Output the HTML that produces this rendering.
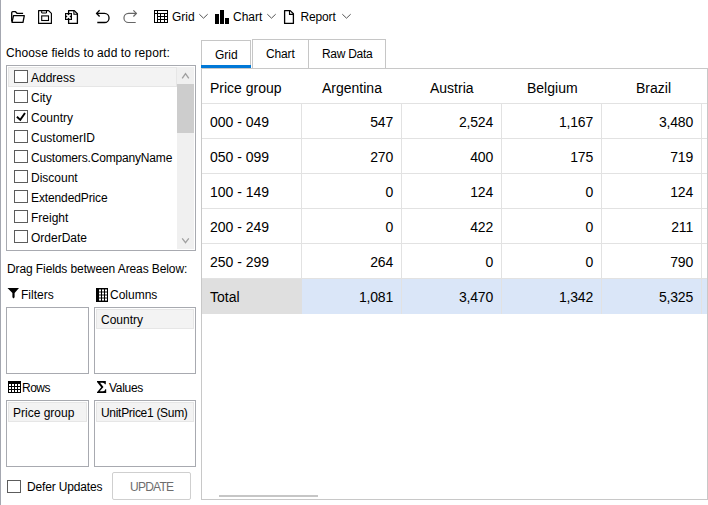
<!DOCTYPE html>
<html><head><meta charset="utf-8">
<style>
*{margin:0;padding:0;box-sizing:border-box}
html,body{width:708px;height:505px;overflow:hidden;background:#fff}
body{position:relative;font-family:"Liberation Sans",sans-serif;font-size:12px;color:#000}
.a{position:absolute}
.t{position:absolute;white-space:pre;line-height:1}
.edge{left:0;top:0;width:1px;height:505px;background:#a4a7b0}
.cb{position:absolute;width:14px;height:13px;border:1px solid #5c5c5c;background:#fff}
.lbrow{position:absolute;left:8px;width:169px;height:20px}
.box{position:absolute;border:1px solid #a8aab0;background:#fff}
.item{position:absolute;background:#f3f3f3;border:1px solid #e6e6e6}
.gl{position:absolute;background:#e2e2e2}
.g14{font-size:14px}
.num{position:absolute;white-space:pre;line-height:1;font-size:14px;text-align:right;width:81px;letter-spacing:-0.2px}
</style></head><body>
<div class="a edge"></div>

<!-- toolbar -->
<svg class="a" style="left:0;top:0" width="360" height="34" viewBox="0 0 360 34">
  <!-- folder -->
  <path d="M11.7 21.5 V12.8 Q11.7 11.7 12.8 11.7 H15.5 L17 13.3 H23.1" fill="none" stroke="#000" stroke-width="1.3" stroke-linejoin="round"/>
  <path d="M12 22.3 L13.5 15.7 H24.3 L23 22.3 Z" fill="none" stroke="#000" stroke-width="1.3" stroke-linejoin="round"/>
  <!-- save -->
  <path d="M38.6 10.6 H48.6 L51.4 13.4 V23.4 H38.6 Z" fill="none" stroke="#000" stroke-width="1.15" stroke-linejoin="round"/>
  <path d="M41.7 10.8 V13 H46.5 V10.8" fill="none" stroke="#000" stroke-width="1"/>
  <rect x="41.7" y="15.9" width="6.8" height="4.6" fill="none" stroke="#000" stroke-width="1.1"/>
  <!-- excel -->
  <path d="M68.6 10.6 H74.3 L77.4 13.7 V23.4 H68.6 Z" fill="none" stroke="#000" stroke-width="1.3" stroke-linejoin="round"/>
  <path d="M73.9 10.8 V14.3 H77.2" fill="none" stroke="#000" stroke-width="1.1"/>
  <rect x="65" y="13" width="7" height="7" fill="#000"/>
  <path d="M66.4 14.4 L70.6 18.6 M70.6 14.4 L66.4 18.6" stroke="#fff" stroke-width="1.5"/>
  <!-- undo -->
  <path d="M96.5 13.4 H104.5 A4.55 4.55 0 0 1 104.5 22.5 H97.3" fill="none" stroke="#000" stroke-width="1.3"/>
  <path d="M99.6 10.3 L96.6 13.4 L99.6 16.5" fill="none" stroke="#000" stroke-width="1.3"/>
  <!-- redo -->
  <path d="M136.5 13.4 H128.5 A4.55 4.55 0 0 0 128.5 22.5 H135.7" fill="none" stroke="#666" stroke-width="1.2"/>
  <path d="M133.4 10.3 L136.4 13.4 L133.4 16.5" fill="none" stroke="#666" stroke-width="1.2"/>
  <!-- grid icon -->
  <g shape-rendering="crispEdges">
  <rect x="154" y="10" width="14" height="13" fill="#000"/>
  <g fill="#fff">
  <rect x="155" y="11" width="2" height="2"/><rect x="158" y="11" width="9" height="2"/>
  <rect x="155" y="14" width="2" height="8"/>
  <rect x="158" y="14" width="2" height="2"/><rect x="161" y="14" width="3" height="2"/><rect x="165" y="14" width="2" height="2"/>
  <rect x="158" y="17" width="2" height="2"/><rect x="161" y="17" width="3" height="2"/><rect x="165" y="17" width="2" height="2"/>
  <rect x="158" y="20" width="2" height="2"/><rect x="161" y="20" width="3" height="2"/><rect x="165" y="20" width="2" height="2"/>
  </g></g>
  <path d="M199.3 14.2 L203.5 18.2 L207.7 14.2" fill="none" stroke="#555" stroke-width="1"/>
  <!-- chart icon -->
  <rect x="215" y="14" width="4" height="10" fill="#000"/>
  <rect x="220" y="10" width="4" height="14" fill="#000"/>
  <rect x="225" y="18" width="4" height="6" fill="#000"/>
  <path d="M267.3 14.2 L271.5 18.2 L275.7 14.2" fill="none" stroke="#555" stroke-width="1"/>
  <!-- report icon -->
  <path d="M284.6 10.6 H290.2 L293.4 13.8 V23.4 H284.6 Z" fill="none" stroke="#000" stroke-width="1.3" stroke-linejoin="round"/>
  <path d="M289.5 10.8 V14.4 H293.2" fill="none" stroke="#000" stroke-width="1.1"/>
  <path d="M342.3 14.2 L346.5 18.2 L350.7 14.2" fill="none" stroke="#555" stroke-width="1"/>
</svg>
<div class="t" style="left:172px;top:11px">Grid</div>
<div class="t" style="left:233px;top:11px">Chart</div>
<div class="t" style="left:300.5px;top:11px;letter-spacing:-0.15px">Report</div>

<!-- left panel -->
<div class="t" style="left:6px;top:47px;letter-spacing:0.1px">Choose fields to add to report:</div>
<div class="box" style="left:6px;top:65px;width:190px;height:186px"></div>
<div class="item" style="left:8px;top:67px;width:169px;height:20px"></div>
<div class="a" style="left:177px;top:67px;width:17px;height:182px;background:#f0f0f0"></div>
<div class="a" style="left:177px;top:84px;width:17px;height:49px;background:#cdcdcd"></div>
<svg class="a" style="left:177px;top:66px" width="18" height="184">
  <path d="M5.2 12.3 L8.5 7.6 L11.8 12.3" fill="none" stroke="#a0a0a0" stroke-width="1.4"/>
  <path d="M5.2 172.4 L8.5 176.6 L11.8 172.4" fill="none" stroke="#a0a0a0" stroke-width="1.3"/>
</svg>
<div class="cb" style="left:14px;top:70px"></div><div class="t" style="left:31px;top:72px">Address</div>
<div class="cb" style="left:14px;top:90px"></div><div class="t" style="left:31px;top:92px">City</div>
<div class="cb" style="left:14px;top:110px"></div><div class="t" style="left:31px;top:112px">Country</div>
<svg class="a" style="left:14px;top:110px" width="14" height="13"><path d="M2.9 6.7 L6.3 9.9 L11 3" fill="none" stroke="#000" stroke-width="1.9"/></svg>
<div class="cb" style="left:14px;top:130px"></div><div class="t" style="left:31px;top:132px">CustomerID</div>
<div class="cb" style="left:14px;top:150px"></div><div class="t" style="left:31px;top:152px;letter-spacing:-0.17px">Customers.CompanyName</div>
<div class="cb" style="left:14px;top:170px"></div><div class="t" style="left:31px;top:172px">Discount</div>
<div class="cb" style="left:14px;top:190px"></div><div class="t" style="left:31px;top:192px;letter-spacing:-0.12px">ExtendedPrice</div>
<div class="cb" style="left:14px;top:210px"></div><div class="t" style="left:31px;top:212px">Freight</div>
<div class="cb" style="left:14px;top:230px"></div><div class="t" style="left:31px;top:232px">OrderDate</div>

<div class="t" style="left:7px;top:263px;letter-spacing:-0.1px">Drag Fields between Areas Below:</div>

<svg class="a" style="left:0;top:280px" width="200" height="120">
  <!-- funnel -->
  <path d="M7.5 8 H19 L14.6 13 V17.2 L13.5 18.5 L12.4 17.2 V13 Z" fill="#000"/>
  <!-- columns icon -->
  <g shape-rendering="crispEdges">
  <rect x="96" y="8" width="12" height="14" fill="#000"/>
  <g fill="#8a8a8a"><rect x="99" y="9" width="2" height="12"/><rect x="102" y="9" width="2" height="12"/><rect x="105" y="9" width="2" height="12"/></g>
  <g fill="#fff">
  <rect x="99" y="10" width="2" height="1"/><rect x="102" y="10" width="2" height="1"/><rect x="105" y="10" width="2" height="1"/>
  <rect x="99" y="13" width="2" height="1"/><rect x="102" y="13" width="2" height="1"/><rect x="105" y="13" width="2" height="1"/>
  <rect x="99" y="16" width="2" height="1"/><rect x="102" y="16" width="2" height="1"/><rect x="105" y="16" width="2" height="1"/>
  <rect x="99" y="19" width="2" height="1"/><rect x="102" y="19" width="2" height="1"/><rect x="105" y="19" width="2" height="1"/>
  </g>
  <!-- rows icon -->
  <rect x="8" y="101" width="13" height="12" fill="#000"/>
  <g fill="#fff">
  <rect x="9" y="104" width="2" height="2"/><rect x="12" y="104" width="2" height="2"/><rect x="15" y="104" width="2" height="2"/><rect x="18" y="104" width="2" height="2"/>
  <rect x="9" y="107" width="2" height="2"/><rect x="12" y="107" width="2" height="2"/><rect x="15" y="107" width="2" height="2"/><rect x="18" y="107" width="2" height="2"/>
  <rect x="9" y="110" width="2" height="2"/><rect x="12" y="110" width="2" height="2"/><rect x="15" y="110" width="2" height="2"/><rect x="18" y="110" width="2" height="2"/>
  </g></g>
  <!-- sigma -->
  <path d="M97 101 H105.8 V104.3 H104.9 Q104.6 102.7 102.6 102.7 H100.1 L103.5 107 L99.7 111.3 H103.1 Q105 111.3 105.3 109.3 H106.2 V113 H97 V112.2 L101.2 107.3 L97 102 Z" fill="#000"/>
</svg>
<div class="t" style="left:21px;top:289px">Filters</div>
<div class="t" style="left:110px;top:289px">Columns</div>
<div class="t" style="left:22px;top:382px;letter-spacing:-0.5px">Rows</div>
<div class="t" style="left:109px;top:382px;letter-spacing:-0.3px">Values</div>

<div class="box" style="left:6px;top:307px;width:83px;height:67px"></div>
<div class="box" style="left:94px;top:307px;width:102px;height:67px"></div>
<div class="item" style="left:96px;top:309px;width:98px;height:20px"></div>
<div class="t" style="left:101px;top:314px">Country</div>
<div class="box" style="left:6px;top:400px;width:83px;height:67px"></div>
<div class="item" style="left:8px;top:402px;width:79px;height:20px"></div>
<div class="t" style="left:13px;top:407px">Price group</div>
<div class="box" style="left:94px;top:400px;width:102px;height:67px"></div>
<div class="item" style="left:96px;top:402px;width:98px;height:20px"></div>
<div class="t" style="left:101px;top:407px;letter-spacing:-0.3px">UnitPrice1 (Sum)</div>

<div class="cb" style="left:7px;top:480px"></div>
<div class="t" style="left:27px;top:481px;letter-spacing:-0.15px">Defer Updates</div>
<div class="a" style="left:112px;top:472px;width:79px;height:28px;border:1px solid #cfcfcf;border-radius:2px"></div>
<div class="t" style="left:130px;top:481px;color:#6d6d6d;letter-spacing:-0.75px">UPDATE</div>

<!-- tabs -->
<div class="a" style="left:201px;top:40px;width:50px;height:28px;border:1px solid #c6c6c6;border-bottom:none"></div>
<div class="a" style="left:201px;top:65px;width:50px;height:3px;background:#0078d7"></div>
<div class="a" style="left:252px;top:39px;width:134px;height:30px;border:1px solid #c6c6c6;border-bottom:none"></div>
<div class="a" style="left:308px;top:39px;width:1px;height:29px;background:#c6c6c6"></div>
<div class="t" style="left:215px;top:49px">Grid</div>
<div class="t" style="left:266px;top:48px;letter-spacing:-0.15px">Chart</div>
<div class="t" style="left:322px;top:48px;letter-spacing:-0.3px">Raw Data</div>

<!-- grid -->
<div class="a" style="left:201px;top:68px;width:507px;height:432px;border:1px solid #c8c8c8"></div>
<div class="gl" style="left:202px;top:103px;width:505px;height:1px"></div>
<div class="gl" style="left:202px;top:138px;width:505px;height:1px"></div>
<div class="gl" style="left:202px;top:173px;width:505px;height:1px"></div>
<div class="gl" style="left:202px;top:208px;width:505px;height:1px"></div>
<div class="gl" style="left:202px;top:243px;width:505px;height:1px"></div>
<div class="gl" style="left:202px;top:278px;width:505px;height:1px"></div>
<div class="gl" style="left:301px;top:104px;width:1px;height:175px"></div>
<div class="gl" style="left:401px;top:104px;width:1px;height:210px"></div>
<div class="gl" style="left:501px;top:104px;width:1px;height:210px"></div>
<div class="gl" style="left:601px;top:104px;width:1px;height:210px"></div>
<div class="gl" style="left:701px;top:104px;width:1px;height:210px"></div>
<div class="a" style="left:202px;top:279px;width:100px;height:35px;background:#dfdfdf"></div>
<div class="a" style="left:302px;top:279px;width:99px;height:35px;background:#dae6f8"></div>
<div class="a" style="left:402px;top:279px;width:99px;height:35px;background:#dae6f8"></div>
<div class="a" style="left:502px;top:279px;width:99px;height:35px;background:#dae6f8"></div>
<div class="a" style="left:602px;top:279px;width:99px;height:35px;background:#dae6f8"></div>
<div class="a" style="left:702px;top:279px;width:5px;height:35px;background:#dae6f8"></div>
<div class="a" style="left:219px;top:495px;width:99px;height:2px;background:#c6c6c6"></div>

<div class="t g14" style="left:210px;top:81px">Price group</div>
<div class="t g14" style="left:322px;top:81px">Argentina</div>
<div class="t g14" style="left:430px;top:81px">Austria</div>
<div class="t g14" style="left:527px;top:81px">Belgium</div>
<div class="t g14" style="left:636px;top:81px">Brazil</div>

<div class="t g14" style="left:210px;top:115px">000 - 049</div>
<div class="t g14" style="left:210px;top:150px">050 - 099</div>
<div class="t g14" style="left:210px;top:185px">100 - 149</div>
<div class="t g14" style="left:210px;top:220px">200 - 249</div>
<div class="t g14" style="left:210px;top:255px">250 - 299</div>
<div class="t g14" style="left:210px;top:290px">Total</div>

<div class="num" style="left:312px;top:115px">547</div>
<div class="num" style="left:412px;top:115px">2,524</div>
<div class="num" style="left:512px;top:115px">1,167</div>
<div class="num" style="left:612px;top:115px">3,480</div>
<div class="num" style="left:312px;top:150px">270</div>
<div class="num" style="left:412px;top:150px">400</div>
<div class="num" style="left:512px;top:150px">175</div>
<div class="num" style="left:612px;top:150px">719</div>
<div class="num" style="left:312px;top:185px">0</div>
<div class="num" style="left:412px;top:185px">124</div>
<div class="num" style="left:512px;top:185px">0</div>
<div class="num" style="left:612px;top:185px">124</div>
<div class="num" style="left:312px;top:220px">0</div>
<div class="num" style="left:412px;top:220px">422</div>
<div class="num" style="left:512px;top:220px">0</div>
<div class="num" style="left:612px;top:220px">211</div>
<div class="num" style="left:312px;top:255px">264</div>
<div class="num" style="left:412px;top:255px">0</div>
<div class="num" style="left:512px;top:255px">0</div>
<div class="num" style="left:612px;top:255px">790</div>
<div class="num" style="left:312px;top:290px">1,081</div>
<div class="num" style="left:412px;top:290px">3,470</div>
<div class="num" style="left:512px;top:290px">1,342</div>
<div class="num" style="left:612px;top:290px">5,325</div>
</body></html>
